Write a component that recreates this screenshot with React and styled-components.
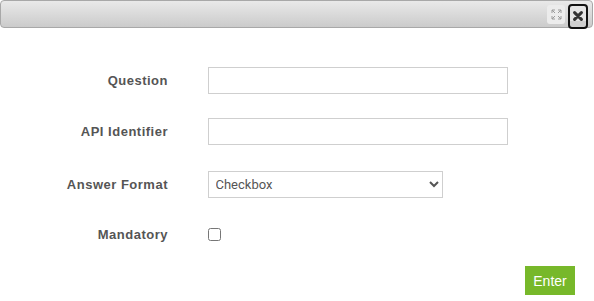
import React from "react";
import styled, { createGlobalStyle } from "styled-components";

const GlobalStyle = createGlobalStyle`
  html, body {
    margin: 0;
    padding: 0;
    background: #fff;
    font-family: "Liberation Sans", Arial, sans-serif;
  }
`;

export default function App() {
  return (
    <Dialog>
      <GlobalStyle />
      <TitleBar>
        <MaxButton title="Maximize">
          <svg width="11" height="11" viewBox="0 0 11 11" fill="none" stroke="#9a9a9a" strokeWidth="1">
            <path d="M1 4V1h3M1 1l3 3" />
            <path d="M7 1h3v3M10 1L7 4" />
            <path d="M1 7v3h3M1 10l3-3" />
            <path d="M7 10h3V7M10 10L7 7" />
          </svg>
        </MaxButton>
        <CloseButton title="Close">
          <svg width="10" height="10" viewBox="0 0 10 10">
            <path d="M1.6 1.6l6.8 6.8M8.4 1.6l-6.8 6.8" stroke="#333" strokeWidth="3" strokeLinecap="round" />
          </svg>
        </CloseButton>
      </TitleBar>
      <Form>
        <Row>
          <Label>Question</Label>
          <TextInput type="text" />
        </Row>
        <Row>
          <Label>API Identifier</Label>
          <TextInput type="text" />
        </Row>
        <Row $top={2}>
          <Label>Answer Format</Label>
          <Select defaultValue="checkbox">
            <option value="text">Text</option>
            <option value="checkbox">Checkbox</option>
            <option value="radio">Radio</option>
          </Select>
        </Row>
        <Row $top={-1}>
          <Label>Mandatory</Label>
          <Check type="checkbox" />
        </Row>
      </Form>
      <Footer>
        <EnterButton>Enter</EnterButton>
      </Footer>
    </Dialog>
  );
}

const Dialog = styled.div`
  width: 594px;
  height: 301px;
  display: flex;
  flex-direction: column;
  background: #fff;
`;

const TitleBar = styled.div`
  box-sizing: border-box;
  width: 593px;
  height: 28px;
  border: 1px solid #a8a8a8;
  border-radius: 4px;
  background: linear-gradient(to bottom, #e9e9e9, #cbcbcb);
  display: flex;
  justify-content: flex-end;
  align-items: flex-start;
  gap: 3px;
  padding: 3px 4px 0 0;
`;

const MaxButton = styled.div`
  width: 18px;
  height: 19px;
  margin-top: 1px;
  border-radius: 3px;
  background: #ececec;
  display: flex;
  align-items: center;
  justify-content: center;
`;

const CloseButton = styled.div`
  box-sizing: border-box;
  width: 20px;
  height: 25px;
  border: 2px solid #111;
  border-radius: 4px;
  background: linear-gradient(to bottom, #e4e4e4 0, #e4e4e4 70%, #cfcfcf 70%);
  display: flex;
  align-items: flex-start;
  justify-content: center;
  padding-top: 5px;
`;

const Form = styled.div`
  display: flex;
  flex-direction: column;
  gap: 24px;
  padding-top: 39px;
`;

const Row = styled.div`
  display: flex;
  align-items: center;
  height: 27px;
  gap: 40px;
  margin-top: ${(p) => p.$top || 0}px;
`;

const Label = styled.label`
  width: 168px;
  margin-right: -0.5px;
  text-align: right;
  font-size: 13px;
  font-weight: bold;
  letter-spacing: 0.5px;
  color: #555;
`;

const TextInput = styled.input`
  box-sizing: border-box;
  width: 300px;
  height: 27px;
  margin: 0;
  border: 1px solid #cfcfcf;
  padding: 4px 8px;
  font-size: 13px;
  outline: none;
`;

const Select = styled.select`
  box-sizing: border-box;
  width: 235px;
  height: 27px;
  margin: 0;
  border: 1px solid #cfcfcf;
  border-radius: 0;
  background: #fff;
  padding: 0 3px;
  font-family: Roboto, "Liberation Sans", sans-serif;
  font-size: 13px;
  color: #555;
  outline: none;
`;

const Check = styled.input`
  width: 13px;
  height: 13px;
  margin: 0;
`;

const Footer = styled.div`
  display: flex;
  justify-content: flex-end;
  padding: 18px 19px 0 0;
`;

const EnterButton = styled.button`
  width: 50px;
  height: 29px;
  border: none;
  background: #77b82a;
  color: #fff;
  font-family: "Liberation Sans", Arial, sans-serif;
  font-size: 14px;
  padding: 0;
  cursor: pointer;
`;
